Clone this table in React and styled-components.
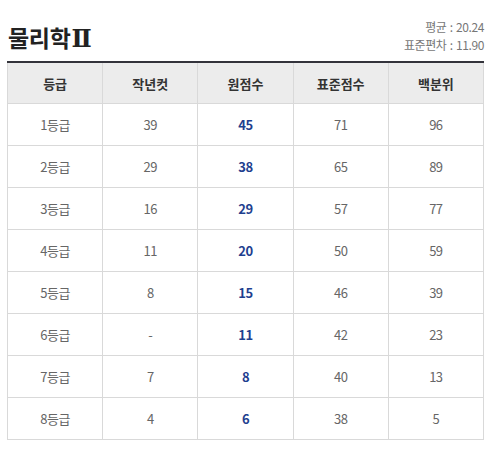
import React from 'react';
import styled, { createGlobalStyle } from 'styled-components';

const GlobalStyle = createGlobalStyle`
  html, body {
    margin: 0;
    padding: 0;
    background: #fff;
    font-family: "Noto Sans CJK KR", "Noto Sans", sans-serif;
  }
`;

const Wrapper = styled.div`
  width: 477px;
  margin-left: 7px;
  padding-top: 18px;
`;

const Head = styled.div`
  display: flex;
  justify-content: space-between;
  align-items: flex-end;
  padding-bottom: 7px;
`;

const Title = styled.h2`
  margin: 0 0 0 1px;
  font-size: 23px;
  font-weight: 700;
  color: #222;
  line-height: 30px;
  letter-spacing: -0.3px;
`;

const Roman = styled.span`
  font-family: "DejaVu Serif", serif;
  font-size: 24px;
  margin-left: 1px;
`;

const Stats = styled.div`
  text-align: right;
  font-size: 12px;
  color: #777;
  line-height: 18px;
  letter-spacing: -0.4px;
  word-spacing: 1px;
`;

const Table = styled.table`
  width: 100%;
  border-collapse: collapse;
  border-top: 2px solid #33333b;
  table-layout: fixed;
`;

const Th = styled.th`
  height: 40px;
  padding: 0;
  background: #ececec;
  border: 1px solid #d9d9d9;
  border-top: none;
  font-size: 13px;
  font-weight: 700;
  color: #333;
`;

const Td = styled.td`
  height: 41px;
  padding: 0;
  border: 1px solid #d9d9d9;
  text-align: center;
  font-size: 13px;
  letter-spacing: -0.5px;
  color: ${(p) => (p.$raw ? '#1f3f8f' : '#666')};
  font-weight: ${(p) => (p.$raw ? 700 : 400)};
`;

const rows = [
  ['1등급', '39', '45', '71', '96'],
  ['2등급', '29', '38', '65', '89'],
  ['3등급', '16', '29', '57', '77'],
  ['4등급', '11', '20', '50', '59'],
  ['5등급', '8', '15', '46', '39'],
  ['6등급', '-', '11', '42', '23'],
  ['7등급', '7', '8', '40', '13'],
  ['8등급', '4', '6', '38', '5'],
];

const App = () => (
  <>
    <GlobalStyle />
    <Wrapper>
      <Head>
        <Title>물리학<Roman>Ⅱ</Roman></Title>
        <Stats>
          <div>평균 : 20.24</div>
          <div>표준편차 : 11.90</div>
        </Stats>
      </Head>
      <Table>
        <thead>
          <tr>
            {['등급', '작년컷', '원점수', '표준점수', '백분위'].map((h) => (
              <Th key={h}>{h}</Th>
            ))}
          </tr>
        </thead>
        <tbody>
          {rows.map((r) => (
            <tr key={r[0]}>
              {r.map((c, i) => (
                <Td key={i} $raw={i === 2}>{c}</Td>
              ))}
            </tr>
          ))}
        </tbody>
      </Table>
    </Wrapper>
  </>
);

export default App;
